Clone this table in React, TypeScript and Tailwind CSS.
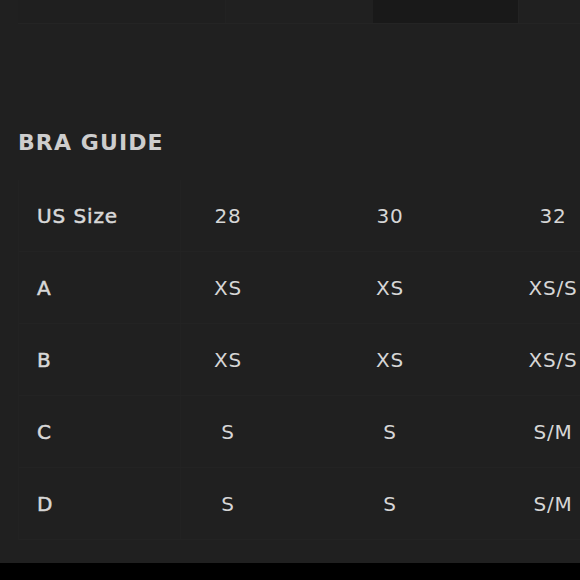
const rows = [
  { label: "US Size", cells: ["28", "30", "32"] },
  { label: "A", cells: ["XS", "XS", "XS/S"] },
  { label: "B", cells: ["XS", "XS", "XS/S"] },
  { label: "C", cells: ["S", "S", "S/M"] },
  { label: "D", cells: ["S", "S", "S/M"] },
];

export default function App() {
  return (
    <div
      className="flex h-[580px] w-[580px] flex-col overflow-hidden bg-[#202020] text-[#d6d6d6]"
      style={{ fontFamily: '"DejaVu Sans", sans-serif' }}
    >
      {/* tail of the previous table */}
      <div className="ml-[18px] flex h-[24px] shrink-0 border-b border-[#242424]">
        <div className="w-[208px] border-r border-[#222222] bg-[#1f1f1f]" />
        <div className="w-[147px] bg-[#202020]" />
        <div className="w-[146px] border-r border-[#232323] bg-[#191919]" />
      </div>

      <h2 className="ml-[18px] mt-[105px] text-[22px] font-bold leading-[28px] tracking-[1.1px] text-[#cdcdcd]">
        BRA GUIDE
      </h2>

      <div className="ml-[18px] mt-[23px] flex flex-col border-l border-[#222222]">
        {rows.map((row) => (
          <div key={row.label} className="flex h-[72px] items-center border-b border-[#232323]">
            <div className="flex h-full w-[162px] shrink-0 items-center border-r border-[#222222] pl-[18px] text-[20px] tracking-[0.9px] text-[#d8d8d8] [-webkit-text-stroke:0.5px_#d8d8d8]">
              {row.label}
            </div>
            <div className="w-[94px] shrink-0 text-center text-[20px] tracking-[0.8px]">{row.cells[0]}</div>
            <div className="ml-[68px] w-[94px] shrink-0 text-center text-[20px] tracking-[0.8px]">{row.cells[1]}</div>
            <div className="ml-[69px] w-[94px] shrink-0 text-center text-[20px] tracking-[0.8px]">{row.cells[2]}</div>
          </div>
        ))}
      </div>

      <div className="flex-1" />
      <div className="h-[17px] shrink-0 bg-black" />
    </div>
  );
}
